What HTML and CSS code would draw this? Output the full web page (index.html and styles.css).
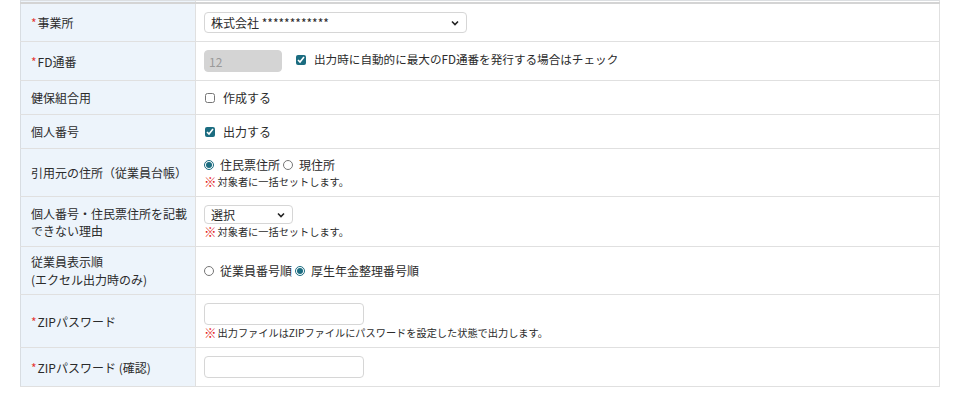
FILE: index.html
```html
<!DOCTYPE html>
<html lang="ja">
<head>
    <meta charset="UTF-8">
    <meta name="viewport" content="width=device-width, initial-scale=1.0">
    <title>出力設定</title>
    <link rel="stylesheet" href="styles.css">
</head>
<body>

<div class="form-wrap">
    <table class="form-table">
        <colgroup>
            <col class="col-label">
            <col>
        </colgroup>
        <tr class="cut">
            <th></th>
            <td></td>
        </tr>
        <tr>
            <th><span class="req">*</span>事業所</th>
            <td>
                <select class="select office">
                    <option>株式会社 ************</option>
                </select>
            </td>
        </tr>
        <tr>
            <th><span class="req">*</span>FD通番</th>
            <td>
                <div class="inline">
                    <input class="text fd" type="text" value="12" disabled>
                    <label class="check fd-check"><input type="checkbox" checked>出力時に自動的に最大のFD通番を発行する場合はチェック</label>
                </div>
            </td>
        </tr>
        <tr>
            <th>健保組合用</th>
            <td><label class="check"><input type="checkbox">作成する</label></td>
        </tr>
        <tr>
            <th>個人番号</th>
            <td><label class="check"><input type="checkbox" checked>出力する</label></td>
        </tr>
        <tr>
            <th>引用元の住所（従業員台帳）</th>
            <td>
                <div class="radios">
                    <label class="radio"><input type="radio" name="addr" checked>住民票住所</label>
                    <label class="radio"><input type="radio" name="addr">現住所</label>
                </div>
                <p class="note"><span class="mark">※</span>対象者に一括セットします。</p>
            </td>
        </tr>
        <tr>
            <th>個人番号・住民票住所を記載<br>できない理由</th>
            <td>
                <select class="select reason">
                    <option>選択</option>
                </select>
                <p class="note gap"><span class="mark">※</span>対象者に一括セットします。</p>
            </td>
        </tr>
        <tr>
            <th class="two-line">従業員表示順<br>(エクセル出力時のみ)</th>
            <td>
                <div class="radios">
                    <label class="radio"><input type="radio" name="order">従業員番号順</label>
                    <label class="radio"><input type="radio" name="order" checked>厚生年金整理番号順</label>
                </div>
            </td>
        </tr>
        <tr>
            <th><span class="req">*</span>ZIPパスワード</th>
            <td>
                <input class="text pass" type="password">
                <p class="note flush"><span class="mark">※</span>出力ファイルはZIPファイルにパスワードを設定した状態で出力します。</p>
            </td>
        </tr>
        <tr>
            <th><span class="req">*</span>ZIPパスワード (確認)</th>
            <td><input class="text pass" type="password"></td>
        </tr>
    </table>
</div>

</body>
</html>
```

FILE: styles.css
```css
body {
    margin: 0;
    background-color: #fff;
    color: #2b2b2b;
    font-family: "Noto Sans CJK JP", "Noto Sans", sans-serif;
    font-size: 12px;
}
.form-wrap {
    padding: 0 20px;
}
.form-table {
    width: 100%;
    border-collapse: collapse;
    table-layout: fixed;
    border: 1px solid #dcdfe2;
}
.col-label {
    width: 175px;
}
.form-table th,
.form-table td {
    border: 1px solid #e0e0e0;
    padding: 7px 8px;
    vertical-align: middle;
    line-height: 17px;
}
.form-table th {
    background-color: #edf4fb;
    font-weight: normal;
    text-align: left;
    padding-left: 10px;
    border-left: 1px solid #d8dde2;
}
.form-table th.two-line {
    padding-top: 6px;
    padding-bottom: 6px;
    line-height: 17.5px;
}
.form-table tr.cut th,
.form-table tr.cut td {
    height: 1px;
    padding: 0;
    border-top: none;
    border-bottom: 2px solid #d4d4d4;
}
.req {
    color: #e53935;
    margin-right: 1px;
}
.select {
    display: block;
    -webkit-appearance: none;
    appearance: none;
    margin: 1px 0;
    padding: 0 20px 0 6px;
    border: 1px solid #d6d6d6;
    border-radius: 4px;
    background-color: #fff;
    background-image: url("data:image/svg+xml;utf8,<svg xmlns='http://www.w3.org/2000/svg' width='8' height='6' viewBox='0 0 8 6'><path d='M1 1.5 L4 4.5 L7 1.5' fill='none' stroke='%23222' stroke-width='1.6'/></svg>");
    background-repeat: no-repeat;
    background-position: right 7px center;
    color: #2b2b2b;
    font-family: inherit;
    font-size: 12px;
}
.select.office {
    width: 263px;
    height: 21px;
}
.select.reason {
    width: 89px;
    height: 19px;
}
.text {
    display: block;
    box-sizing: border-box;
    margin: 1px 0;
    height: 22px;
    padding: 0 4px;
    border: 1px solid #d6d6d6;
    border-radius: 4px;
    font-family: inherit;
    font-size: 12px;
    color: #2b2b2b;
}
.text.fd {
    width: 78px;
    border-color: #d4d4d4;
    background-color: #d4d4d4;
    color: #9a9a9a;
}
.text.pass {
    width: 160px;
}
.inline {
    display: flex;
    align-items: center;
}
.check,
.radio {
    display: inline-flex;
    align-items: center;
    line-height: 19px;
}
.check input {
    width: 10px;
    height: 10px;
    margin: 0 8px 0 1px;
    accent-color: #1b6c80;
}
.fd-check {
    margin-left: 13px;
    align-self: flex-start;
    margin-top: 1px;
    font-size: 11.6px;
}
.radios {
    display: flex;
    gap: 3px;
    line-height: 17px;
}
.radio {
    line-height: 17px;
}
.radio input {
    width: 10px;
    height: 10px;
    margin: 0 6px 0 0;
    accent-color: #1b6c80;
}
.note {
    margin: 2px 0 0;
    font-size: 10.2px;
    line-height: 14px;
}
.note.gap {
    margin-top: 1px;
}
.note.flush {
    margin-top: 0;
}
.mark {
    color: #e3211c;
    font-size: 12.5px;
    font-weight: bold;
    line-height: 14px;
    vertical-align: top;
    margin-right: 1px;
}
```
